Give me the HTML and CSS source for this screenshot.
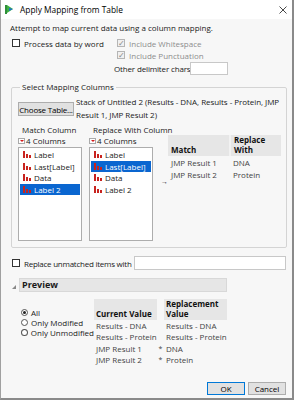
FILE: index.html
```html
<!DOCTYPE html>
<html lang="en">
<head>
    <meta charset="UTF-8">
    <title>Apply Mapping from Table</title>
    <link rel="stylesheet" href="styles.css">
</head>
<body>
    <div class="window">
        <!-- Pasek tytułu -->
        <div class="titlebar">
            <svg class="app-icon" width="9" height="9" viewBox="0 0 9 9">
                <rect x="0" y="0" width="2" height="9" fill="#2f8f3a"/>
                <polygon points="2,0 8,4 2,8" fill="#3cb043"/>
                <polygon points="4,3 8,4 4,6" fill="#1e6fd0"/>
            </svg>
            <span class="title">Apply Mapping from Table</span>
            <svg class="close" width="8" height="8" viewBox="0 0 8 8">
                <path d="M0.5 0.5 L7.5 7.5 M7.5 0.5 L0.5 7.5" stroke="#333" stroke-width="0.9"/>
            </svg>
        </div>

        <div class="content">
            <p class="intro">Attempt to map current data using a column mapping.</p>

            <div class="options">
                <label class="check"><span class="box"></span>Process data by word</label>
                <div class="word-opts">
                    <label class="check disabled"><span class="box checked"></span>Include Whitespace</label>
                    <label class="check disabled"><span class="box checked"></span>Include Punctuation</label>
                    <div class="delim">Other delimiter chars <span class="field small"></span></div>
                </div>
            </div>

            <!-- Grupa kolumn -->
            <fieldset class="group">
                <legend>Select Mapping Columns</legend>
                <div class="table-row">
                    <button class="btn choose">Choose Table...</button>
                    <span class="table-name">Stack of Untitled 2 (Results - DNA, Results - Protein, JMP Result 1, JMP Result 2)</span>
                </div>
                <div class="columns">
                    <div class="col-pick">
                        <div class="col-label">Match Column</div>
                        <div class="col-count"><span class="menu-tri"></span>4 Columns</div>
                        <ul class="listbox">
                            <li><span class="bars"><i></i><i></i><i></i></span>Label</li>
                            <li><span class="bars"><i></i><i></i><i></i></span>Last[Label]</li>
                            <li><span class="bars"><i></i><i></i><i></i></span>Data</li>
                            <li class="selected"><span class="bars"><i></i><i></i><i></i></span>Label 2</li>
                        </ul>
                    </div>
                    <div class="col-pick">
                        <div class="col-label">Replace With Column</div>
                        <div class="col-count"><span class="menu-tri"></span>4 Columns</div>
                        <ul class="listbox">
                            <li><span class="bars"><i></i><i></i><i></i></span>Label</li>
                            <li class="selected"><span class="bars"><i></i><i></i><i></i></span>Last[Label]</li>
                            <li><span class="bars"><i></i><i></i><i></i></span>Data</li>
                            <li><span class="bars"><i></i><i></i><i></i></span>Label 2</li>
                        </ul>
                    </div>
                    <div class="arrow">→</div>
                    <table class="map-table">
                        <tr><th class="c1">Match</th><th class="c2">Replace<br>With</th></tr>
                        <tr><td>JMP Result 1</td><td>DNA</td></tr>
                        <tr><td>JMP Result 2</td><td>Protein</td></tr>
                    </table>
                </div>
            </fieldset>

            <div class="unmatched">
                <label class="check"><span class="box"></span>Replace unmatched items with</label>
                <span class="field wide"></span>
            </div>

            <!-- Podgląd -->
            <div class="preview-head">
                <span class="disclosure"></span>
                <div class="preview-title">Preview</div>
            </div>
            <div class="preview">
                <div class="radios">
                    <label class="radio"><span class="dot on"></span>All</label>
                    <label class="radio"><span class="dot"></span>Only Modified</label>
                    <label class="radio"><span class="dot"></span>Only Unmodified</label>
                </div>
                <table class="preview-table">
                    <tr><th>Current Value</th><th class="gap"></th><th>Replacement<br>Value</th></tr>
                    <tr><td>Results - DNA</td><td class="gap"></td><td>Results - DNA</td></tr>
                    <tr><td>Results - Protein</td><td class="gap"></td><td>Results - Protein</td></tr>
                    <tr><td>JMP Result 1</td><td class="gap">*</td><td>DNA</td></tr>
                    <tr><td>JMP Result 2</td><td class="gap">*</td><td>Protein</td></tr>
                </table>
            </div>

            <div class="actions">
                <button class="btn action">OK</button>
                <button class="btn action">Cancel</button>
            </div>
        </div>
    </div>
</body>
</html>
```

FILE: styles.css
```css
* {
    margin: 0;
    padding: 0;
    box-sizing: border-box;
}

body {
    font-family: 'Open Sans', 'Noto Sans', sans-serif;
    font-size: 8px;
    color: #1a1a1a;
    background: #fff;
}

.window {
    width: 294px;
    height: 400px;
    overflow: hidden;
    background: #f7f7f7;
    border-left: 1px solid #a0a0a0;
    border-right: 2px solid #8a8a8a;
    border-bottom: 2px solid #8a8a8a;
    display: flex;
    flex-direction: column;
}

/* Pasek tytułu */
.titlebar {
    height: 19px;
    flex-shrink: 0;
    background: #fff;
    display: flex;
    align-items: center;
    padding-left: 4px;
    padding-right: 5px;
}

.app-icon {
    margin-right: 6px;
}

.title {
    flex: 1;
    font-size: 8.4px;
    color: #000;
}

.content {
    padding: 3px 6px 0 9px;
    flex: 1;
    display: flex;
    flex-direction: column;
}

.content > * {
    flex-shrink: 0;
}

.intro {
    line-height: 12px;
    margin-bottom: 3px;
}

/* Checkboxy */
.check {
    display: flex;
    align-items: center;
    height: 12px;
    white-space: nowrap;
}

.box {
    width: 8px;
    height: 8px;
    border: 1px solid #333;
    background: #fff;
    margin-right: 4px;
    position: relative;
}

.box.checked::after {
    content: '✓';
    position: absolute;
    left: 0;
    top: -3px;
    font-size: 8px;
    color: #888;
}

.check.disabled {
    color: #8d8d8d;
}

.check.disabled .box {
    border-color: #b5b5b5;
    background: #f0f0f0;
}

.options {
    display: flex;
    padding-left: 2px;
}

.options > .check {
    width: 105px;
}

.word-opts {
    display: flex;
    flex-direction: column;
}

.delim {
    display: flex;
    align-items: center;
    margin-left: -3px;
    margin-top: 1px;
    letter-spacing: -0.15px;
}

.field {
    display: inline-block;
    background: #fff;
    border: 1px solid #c8c8c8;
    height: 13px;
}

.field.small {
    width: 38px;
}

/* Grupa */
.group {
    border: 1px solid #d4d4d4;
    border-radius: 2px;
    margin: 7px 0 0 1px;
    padding: 0 2px 6px 6px;
    width: 276px;
}

.group legend {
    padding: 0 2px;
    margin-left: 2px;
    line-height: 10px;
}

.table-row {
    display: flex;
    align-items: flex-start;
    margin-top: 3px;
}

.btn {
    font-family: inherit;
    font-size: 8px;
    color: #000;
    background: #e1e1e1;
    border: 1px solid #adadad;
    height: 13px;
    white-space: nowrap;
}

.choose {
    width: 56px;
    height: 14px;
    margin-top: 7px;
    padding: 0;
    flex-shrink: 0;
    margin-right: 2px;
    letter-spacing: -0.2px;
}

.table-name {
    line-height: 13px;
    letter-spacing: -0.05px;
}

.columns {
    display: flex;
    align-items: flex-start;
    margin-top: 3px;
}

.col-pick {
    display: flex;
    flex-direction: column;
    width: 64px;
    margin-right: 7px;
}

.col-pick + .col-pick {
    margin-right: 0;
}

.col-label {
    line-height: 11px;
    padding-left: 4px;
    white-space: nowrap;
}

.col-count {
    display: flex;
    align-items: center;
    height: 11px;
}

.menu-tri {
    width: 7px;
    height: 6px;
    background: #fff;
    border: 1px solid #aaa;
    margin-right: 1px;
    position: relative;
}

.menu-tri::after {
    content: '';
    position: absolute;
    left: 1px;
    top: 1px;
    border-left: 2px solid transparent;
    border-right: 2px solid transparent;
    border-top: 2px solid #d41c1c;
}

.listbox {
    list-style: none;
    width: 64px;
    height: 94px;
    background: #fff;
    border: 1px solid #adadad;
    padding: 1px;
    margin-top: 1px;
}

.listbox li {
    display: flex;
    align-items: center;
    height: 11.5px;
    padding-left: 3px;
    white-space: nowrap;
}

.listbox li.selected {
    background: #0a66d0;
    color: #fff;
}

.bars {
    display: flex;
    align-items: flex-end;
    height: 7px;
    gap: 1px;
    margin-right: 3px;
}

.bars i {
    width: 2px;
    background: #c8231f;
}

.bars i:nth-child(1) { height: 7px; }
.bars i:nth-child(2) { height: 4px; }
.bars i:nth-child(3) { height: 3px; }

.arrow {
    width: 15px;
    padding-left: 8px;
    margin-top: 53px;
    font-size: 7px;
    line-height: 9px;
}

.map-table {
    border-collapse: collapse;
    margin-top: 11px;
    width: 113px;
    table-layout: fixed;
}

.map-table th {
    background: #e6e6e6;
    color: #111;
    text-align: left;
    font-weight: 700;
    line-height: 10px;
    vertical-align: bottom;
    padding: 0 2px 1px 3px;
}

.map-table th.c1 {
    width: 62px;
    border-right: 2px solid #f2f2f2;
}

.map-table td {
    color: #444;
    line-height: 11px;
    padding: 1px 2px 0 3px;
    white-space: nowrap;
}

/* Niedopasowane */
.unmatched {
    display: flex;
    align-items: center;
    margin-top: 8px;
    padding-left: 2px;
    gap: 2px;
}

.unmatched .check {
    letter-spacing: -0.25px;
}

.field.wide {
    flex: 1;
    height: 14px;
}

/* Podgląd */
.preview-head {
    display: flex;
    align-items: center;
    margin-top: 8px;
}

.disclosure {
    width: 0;
    height: 0;
    border-left: 4px solid transparent;
    border-bottom: 4px solid #888;
    margin: 3px 3px 0 2px;
}

.preview-title {
    width: 208px;
    height: 14px;
    background: #e6e6e6;
    border: 1px solid #d8d8d8;
    font-weight: 700;
    font-size: 9px;
    line-height: 12px;
    padding-left: 2px;
}

.preview {
    display: flex;
    margin-top: 7px;
}

.radios {
    display: flex;
    flex-direction: column;
    padding-left: 11px;
    padding-top: 8px;
    width: 84px;
}

.radio {
    display: flex;
    align-items: center;
    height: 10px;
    white-space: nowrap;
}

.dot {
    width: 7px;
    height: 7px;
    border: 1px solid #555;
    border-radius: 50%;
    background: #fff;
    margin-right: 3px;
    position: relative;
}

.dot.on::after {
    content: '';
    position: absolute;
    left: 1px;
    top: 1px;
    width: 3px;
    height: 3px;
    border-radius: 50%;
    background: #222;
}

.preview-table {
    border-collapse: collapse;
    table-layout: fixed;
    width: 133px;
}

.preview-table th {
    background: #e6e6e6;
    color: #111;
    text-align: left;
    font-weight: 700;
    line-height: 10px;
    vertical-align: bottom;
    padding: 0 2px 1px 2px;
    width: 63px;
}

.preview-table th.gap {
    background: transparent;
    width: 7px;
    padding: 0;
}

.preview-table td {
    color: #444;
    line-height: 11.3px;
    padding: 0 2px;
    white-space: nowrap;
}

.preview-table td.gap {
    padding: 0;
    text-align: center;
    font-size: 7px;
}

.actions {
    margin-top: auto;
    margin-bottom: 3px;
    display: flex;
    justify-content: flex-end;
    gap: 3px;
}

.action {
    width: 38px;
    height: 13px;
}

.action:first-child {
    border-color: #0078d7;
}
```
